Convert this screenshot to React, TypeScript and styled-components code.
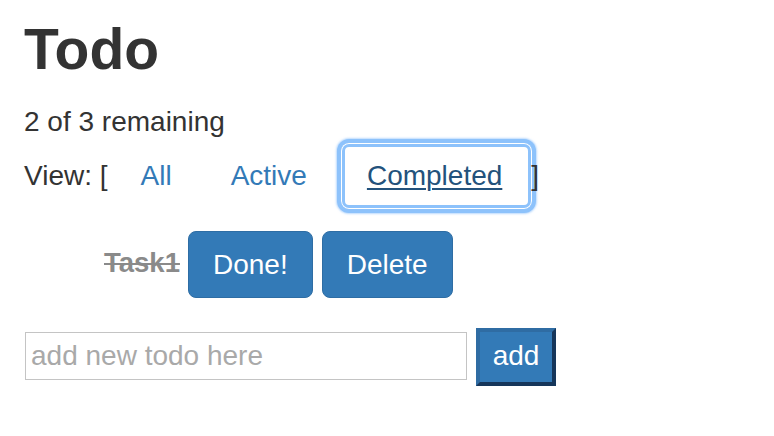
import React from "react";
import styled, { createGlobalStyle } from "styled-components";

const Global = createGlobalStyle`
  html, body { margin: 0; padding: 0; background: #fff; }
  body {
    font-family: "Liberation Sans", Arial, Helvetica, sans-serif;
    font-size: 28px;
    line-height: 40px;
    color: #333;
  }
  * { box-sizing: border-box; }
`;

const Page = styled.div`
  padding: 0 24px;
`;

const Title = styled.h1`
  margin: 18px 0 22px;
  font-size: 57px;
  line-height: 62px;
  font-weight: bold;
  color: #333;
`;

const Remaining = styled.p`
  margin: 0;
  font-size: 28px;
  line-height: 40px;
`;

const ViewRow = styled.div`
  display: flex;
  align-items: center;
  height: 66px;
  margin-top: 1px;
`;

const Bracket = styled.span<{ $ml?: number }>`
  position: relative;
  margin-left: ${(p) => p.$ml ?? 0}px;
  line-height: 40px;
  white-space: pre;
`;

const LinkButton = styled.button<{ $active?: boolean; $ml: number }>`
  margin-left: ${(p) => p.$ml}px;
  height: 66px;
  padding: ${(p) => (p.$active ? "12px 29px 12px 25px" : "12px 25px")};
  border: 1px solid transparent;
  border-radius: 8px;
  background: transparent;
  font-family: inherit;
  font-size: 28px;
  line-height: 40px;
  cursor: pointer;
  color: ${(p) => (p.$active ? "#23527c" : "#337ab7")};
  text-decoration: ${(p) => (p.$active ? "underline" : "none")};
  text-underline-offset: 3px;
  text-decoration-thickness: 2px;
  box-shadow: ${(p) =>
    p.$active
      ? "0 0 0 4px #8dc2fb, 0 0 2px 5px rgba(141,194,251,0.6), inset 0 0 0 3px #8dc2fb"
      : "none"};
`;

const TaskList = styled.ul`
  list-style: none;
  margin: 22px 0 0;
  padding-left: 80px;
`;

const TaskItem = styled.li`
  display: flex;
  align-items: center;
  gap: 8px;
`;

const TaskName = styled.span<{ $done?: boolean }>`
  font-size: 27.5px;
  font-weight: bold;
  color: ${(p) => (p.$done ? "#8a8a8a" : "#333")};
  text-decoration: ${(p) => (p.$done ? "line-through" : "none")};
  text-decoration-thickness: 2px;
  margin-top: -3px;
`;

const PrimaryButton = styled.button<{ $ml?: number }>`
  margin-left: ${(p) => p.$ml ?? 0}px;
  height: 67px;
  padding: 12px 24px;
  border: 1px solid #2e6da4;
  border-radius: 8px;
  background: #337ab7;
  color: #fff;
  font-family: inherit;
  font-size: 28px;
  line-height: 40px;
`;

const AddForm = styled.form`
  display: flex;
  align-items: center;
  gap: 9px;
  margin-top: 30px;
  padding-left: 1px;
`;

const TodoInput = styled.input`
  width: 442px;
  height: 48px;
  margin-bottom: 2px;
  padding: 0 5px;
  border: 1px solid #c4c4c4;
  font-family: inherit;
  font-size: 28px;
  color: #333;
  outline: none;
  &::placeholder { color: #a9a9a9; }
`;

const AddButton = styled.button`
  width: 80px;
  height: 58px;
  padding: 0 12px 2px;
  border: 4px solid;
  border-color: #2f6ca3 #16365a #16365a #2f6ca3;
  background: #337ab7;
  color: #fff;
  font-family: inherit;
  font-size: 28px;
  line-height: 32px;
`;

export default function App() {
  return (
    <Page>
      <Global />
      <Title>Todo</Title>
      <Remaining>2 of 3 remaining</Remaining>
      <ViewRow>
        <Bracket>View: [</Bracket>
        <LinkButton $ml={7}>All</LinkButton>
        <LinkButton $ml={7}>Active</LinkButton>
        <LinkButton $ml={8} $active>Completed</LinkButton>
        <Bracket $ml={-1}>]</Bracket>
      </ViewRow>
      <TaskList>
        <TaskItem>
          <TaskName $done>Task1</TaskName>
          <PrimaryButton>Done!</PrimaryButton>
          <PrimaryButton $ml={1}>Delete</PrimaryButton>
        </TaskItem>
      </TaskList>
      <AddForm onSubmit={(e) => e.preventDefault()}>
        <TodoInput placeholder="add new todo here" />
        <AddButton type="submit">add</AddButton>
      </AddForm>
    </Page>
  );
}
